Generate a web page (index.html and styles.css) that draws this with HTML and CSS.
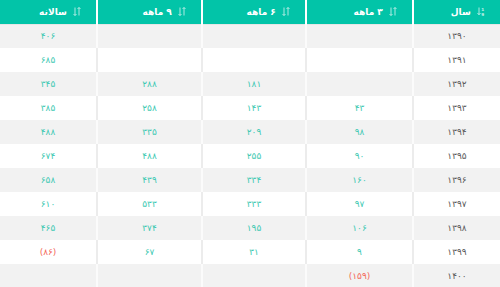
FILE: index.html
```html
<!DOCTYPE html>
<html lang="fa" dir="rtl">
<head>
  <meta charset="UTF-8" />
  <meta name="viewport" content="width=device-width, initial-scale=1.0"/>
  <title>سود هر سهم</title>
  <link rel="stylesheet" href="styles.css">
</head>
<body>
  <table class="eps">
    <colgroup>
      <col class="c-year">
      <col class="c-q3">
      <col class="c-q6">
      <col class="c-q9">
      <col class="c-yr">
    </colgroup>
    <thead>
      <tr>
        <th>
          <svg class="sort" viewBox="0 0 8 9" width="8" height="9"><path d="M2 0.5v7M0.5 6l1.5 1.8L3.5 6" /><text x="5.6" y="4" font-size="4.2" fill="currentColor" stroke="none" text-anchor="middle">1</text><text x="5.6" y="8.6" font-size="4.2" fill="currentColor" stroke="none" text-anchor="middle">9</text></svg>
          سال
        </th>
        <th><svg class="sort" viewBox="0 0 8 9" width="8" height="9"><path d="M2 0.5v8M0.5 7l1.5 1.5L3.5 7M6 8.5v-8M4.5 2L6 0.5 7.5 2" /></svg> ۳ ماهه</th>
        <th><svg class="sort" viewBox="0 0 8 9" width="8" height="9"><path d="M2 0.5v8M0.5 7l1.5 1.5L3.5 7M6 8.5v-8M4.5 2L6 0.5 7.5 2" /></svg> ۶ ماهه</th>
        <th><svg class="sort" viewBox="0 0 8 9" width="8" height="9"><path d="M2 0.5v8M0.5 7l1.5 1.5L3.5 7M6 8.5v-8M4.5 2L6 0.5 7.5 2" /></svg> ۹ ماهه</th>
        <th><svg class="sort" viewBox="0 0 8 9" width="8" height="9"><path d="M2 0.5v8M0.5 7l1.5 1.5L3.5 7M6 8.5v-8M4.5 2L6 0.5 7.5 2" /></svg> سالانه</th>
      </tr>
    </thead>
    <tbody>
      <tr><td class="year">۱۳۹۰</td><td></td><td></td><td></td><td>۴۰۶</td></tr>
      <tr><td class="year">۱۳۹۱</td><td></td><td></td><td></td><td>۶۸۵</td></tr>
      <tr><td class="year">۱۳۹۲</td><td></td><td>۱۸۱</td><td>۲۸۸</td><td>۳۴۵</td></tr>
      <tr><td class="year">۱۳۹۳</td><td>۴۳</td><td>۱۴۳</td><td>۲۵۸</td><td>۳۸۵</td></tr>
      <tr><td class="year">۱۳۹۴</td><td>۹۸</td><td>۲۰۹</td><td>۳۳۵</td><td>۴۸۸</td></tr>
      <tr><td class="year">۱۳۹۵</td><td>۹۰</td><td>۲۵۵</td><td>۴۸۸</td><td>۶۷۴</td></tr>
      <tr><td class="year">۱۳۹۶</td><td>۱۶۰</td><td>۳۳۴</td><td>۴۳۹</td><td>۶۵۸</td></tr>
      <tr><td class="year">۱۳۹۷</td><td>۹۷</td><td>۳۳۳</td><td>۵۳۳</td><td>۶۱۰</td></tr>
      <tr><td class="year">۱۳۹۸</td><td>۱۰۶</td><td>۱۹۵</td><td>۳۷۴</td><td>۴۶۵</td></tr>
      <tr><td class="year">۱۳۹۹</td><td>۹</td><td>۳۱</td><td>۶۷</td><td class="neg">(۸۶)</td></tr>
      <tr><td class="year">۱۴۰۰</td><td class="neg">(۱۵۹)</td><td></td><td></td><td></td></tr>
    </tbody>
  </table>
</body>
</html>
```

FILE: styles.css
```css
* {
  margin: 0;
  padding: 0;
  box-sizing: border-box;
}

body {
  background: #fff;
  font-family: "DejaVu Sans", "Noto Sans", sans-serif;
}

.eps {
  width: 500px;
  border-collapse: collapse;
  table-layout: fixed;
  direction: rtl;
}

.c-year { width: 87px; }
.c-q3 { width: 107px; }
.c-q6 { width: 104px; }
.c-q9 { width: 105px; }
.c-yr { width: 97px; }

.eps th {
  height: 24px;
  background: #02c4a8;
  color: #fff;
  font-size: 9px;
  font-weight: bold;
  text-align: right;
  padding: 0 15px 0 8px;
  border-left: 2px solid #fff;
  border-bottom: 1px solid #e6e6e6;
  white-space: nowrap;
}

.eps th:last-child {
  border-left: none;
}

.sort {
  vertical-align: -1px;
  margin-left: 3px;
  fill: none;
  stroke: currentColor;
  stroke-width: 0.9;
  opacity: 0.75;
}

.eps td {
  height: 24px;
  text-align: center;
  font-size: 9px;
  color: #3ec9b2;
  border-left: 2px solid #ececec;
}

.eps td:last-child {
  border-left: none;
}

.eps tbody tr:nth-child(odd) td {
  background: #f2f2f2;
  border-left-color: #fbfbfb;
}

.eps td.year {
  color: #5a5a5a;
}

.eps td.neg {
  color: #f4695a;
}
```
